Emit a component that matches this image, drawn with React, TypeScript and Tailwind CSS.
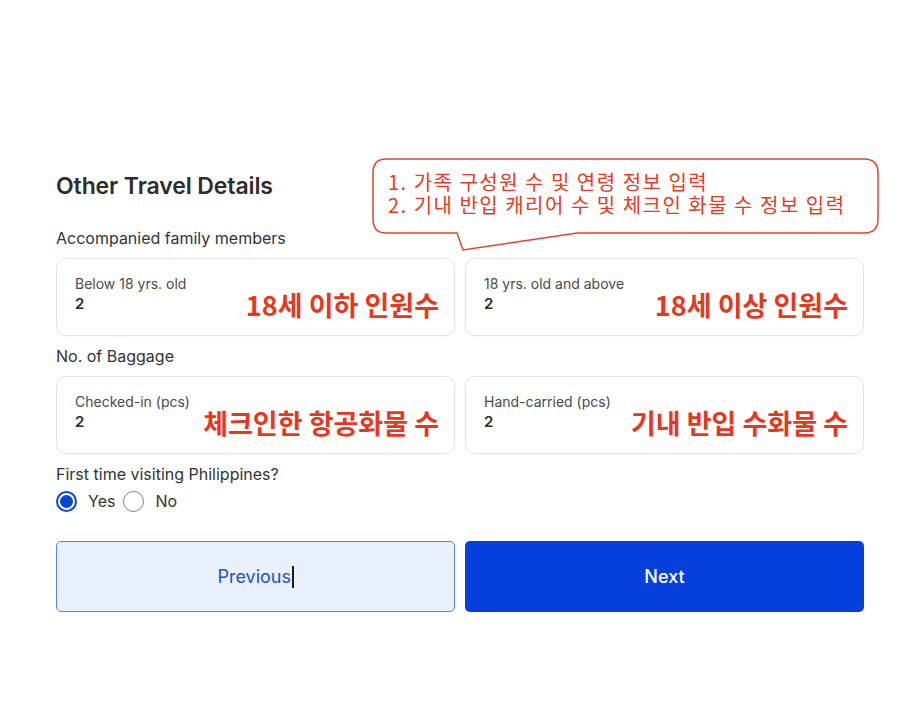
const font = { fontFamily: "Inter, 'Noto Sans', sans-serif" };

function Field({ label, value, note }: { label: string; value: string; note: string }) {
  return (
    <div className="flex h-[78px] items-start justify-between rounded-[10px] border border-[#e4e4e7] bg-white pl-[18px] pr-[15px] pt-[15px] shadow-[0_1px_2px_rgba(0,0,0,0.03)]">
      <div className="flex flex-col">
        <span className="text-[14px] leading-[19px] text-[#4a4a4a]">{label}</span>
        <span className="mt-[1px] text-[15px] font-semibold leading-[20px] text-[#2a2a2a]">{value}</span>
      </div>
      <span
        className="mt-[15px] text-[27px] font-bold leading-[32px] text-[#e5391f]"
        style={{ fontFamily: "'Noto Sans CJK KR', sans-serif" }}
      >
        {note}
      </span>
    </div>
  );
}

function Radio({ checked, label }: { checked: boolean; label: string }) {
  return (
    <label className="flex items-center gap-[11px]">
      {checked ? (
        <span className="flex h-[21px] w-[21px] items-center justify-center rounded-full border-2 border-[#0a43d8]">
          <span className="h-[13px] w-[13px] rounded-full bg-[#0a43d8]" />
        </span>
      ) : (
        <span className="h-[21px] w-[21px] rounded-full border-[1.5px] border-[#7a7a7a]" />
      )}
      <span className="text-[16px] text-[#333]">{label}</span>
    </label>
  );
}

export default function App() {
  return (
    <div className="relative h-[726px] w-[920px] bg-white" style={font}>
      <div className="flex w-[864px] flex-col pl-[56px] pt-[172px]">
        <h2 className="text-[23px] font-semibold leading-[28px] tracking-[-0.1px] text-[#2d2d2d]">
          Other Travel Details
        </h2>
        <p className="mt-[28px] text-[16px] leading-[20px] text-[#333]">Accompanied family members</p>
        <div className="mt-[10px] grid grid-cols-2 gap-[10px]">
          <Field label="Below 18 yrs. old" value="2" note="18세 이하 인원수" />
          <Field label="18 yrs. old and above" value="2" note="18세 이상 인원수" />
        </div>
        <p className="mt-[10px] text-[16px] leading-[20px] text-[#333]">No. of Baggage</p>
        <div className="mt-[10px] grid grid-cols-2 gap-[10px]">
          <Field label="Checked-in (pcs)" value="2" note="체크인한 항공화물 수" />
          <Field label="Hand-carried (pcs)" value="2" note="기내 반입 수화물 수" />
        </div>
        <p className="mt-[10px] text-[16px] leading-[20px] text-[#333]">First time visiting Philippines?</p>
        <div className="mt-[5px] flex items-center gap-[8px]">
          <Radio checked label="Yes" />
          <Radio checked={false} label="No" />
        </div>
        <div className="mt-[28px] grid grid-cols-2 gap-[10px]">
          <button className="flex h-[71px] items-center justify-center rounded-[5px] border border-[#5c82e6] bg-[#e9f0fe] text-[18px] text-[#1f4fd6]">
            Previous<span className="ml-[1px] inline-block h-[22px] w-[1.5px] bg-[#1a1a1a]" />
          </button>
          <button className="flex h-[71px] items-center justify-center rounded-[5px] bg-[#0540dc] text-[18px] font-medium text-white">
            Next
          </button>
        </div>
      </div>

      <div className="absolute left-[372px] top-[158px] h-[95px] w-[507px]">
        <svg className="absolute inset-0" width="507" height="95" viewBox="0 0 507 95">
          <path
            d="M14 1 H492 Q506 1 506 15 V61 Q506 75 492 75 H205 L91 92 L85 75 H14 Q1 75 1 61 V15 Q1 1 14 1 Z"
            fill="white"
            stroke="#e0452f"
            strokeWidth="1.5"
          />
        </svg>
        <div
          className="relative pl-[16px] pt-[12px] text-[20px] leading-[23px] tracking-[1.5px] text-[#e63a22]"
          style={{ fontFamily: "'Noto Sans CJK KR', sans-serif" }}
        >
          <div>1. 가족 구성원 수 및 연령 정보 입력</div>
          <div>2. 기내 반입 캐리어 수 및 체크인 화물 수 정보 입력</div>
        </div>
      </div>
    </div>
  );
}
